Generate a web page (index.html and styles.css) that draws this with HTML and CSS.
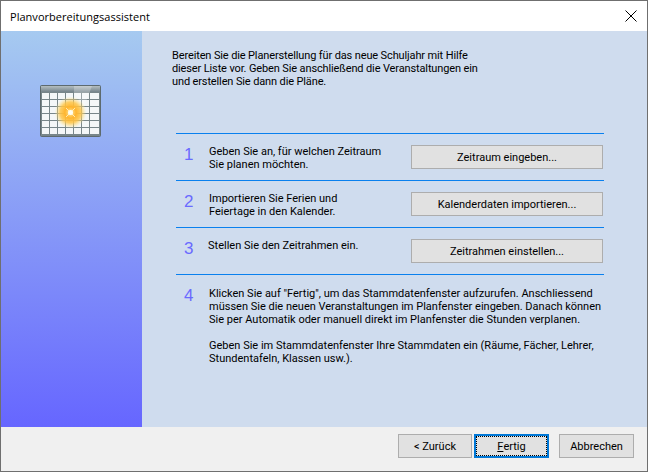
FILE: index.html
```html
<!DOCTYPE html>
<html lang="de">
<head>
<meta charset="utf-8">
<title>Planvorbereitungsassistent</title>
<link rel="stylesheet" href="styles.css">
</head>
<body>
<div class="window">
  <header class="titlebar">
    <span class="title">Planvorbereitungsassistent</span>
    <svg class="close" width="12" height="12" viewBox="0 0 12 12"><path d="M0.5 0.5L11.5 11.5M11.5 0.5L0.5 11.5" stroke="#000" stroke-width="1" fill="none"/></svg>
  </header>
  <div class="main">
    <aside class="sidebar">
      <svg class="calendar" width="62" height="53" viewBox="0 0 62 53">
        <defs>
          <linearGradient id="head" x1="0" y1="0" x2="0" y2="1"><stop offset="0" stop-color="#b4bec0"/><stop offset="1" stop-color="#75838a"/></linearGradient>
          <radialGradient id="glow"><stop offset="0" stop-color="#ffe9a0"/><stop offset="0.35" stop-color="#ffb52e"/><stop offset="0.65" stop-color="#ffc648" stop-opacity="0.85"/><stop offset="1" stop-color="#ffe890" stop-opacity="0"/></radialGradient>
        </defs>
        <rect x="0.5" y="0.5" width="60" height="51" rx="1" fill="#78868a" stroke="#5d6a6e"/>
        <rect x="1" y="1" width="59" height="6" fill="url(#head)"/>
        <g fill="#f4f7f8">
          <rect x="2" y="8" width="7" height="6"/><rect x="10" y="8" width="7" height="6"/><rect x="18" y="8" width="7" height="6"/><rect x="26" y="8" width="7" height="6"/><rect x="34" y="8" width="7" height="6"/><rect x="42" y="8" width="7" height="6"/><rect x="50" y="8" width="9" height="6"/>
          <rect x="2" y="15" width="7" height="6"/><rect x="10" y="15" width="7" height="6"/><rect x="18" y="15" width="7" height="6"/><rect x="26" y="15" width="7" height="6"/><rect x="34" y="15" width="7" height="6"/><rect x="42" y="15" width="7" height="6"/><rect x="50" y="15" width="9" height="6"/>
          <rect x="2" y="22" width="7" height="6"/><rect x="10" y="22" width="7" height="6"/><rect x="18" y="22" width="7" height="6"/><rect x="26" y="22" width="7" height="6"/><rect x="34" y="22" width="7" height="6"/><rect x="42" y="22" width="7" height="6"/><rect x="50" y="22" width="9" height="6"/>
          <rect x="2" y="29" width="7" height="6"/><rect x="10" y="29" width="7" height="6"/><rect x="18" y="29" width="7" height="6"/><rect x="26" y="29" width="7" height="6"/><rect x="34" y="29" width="7" height="6"/><rect x="42" y="29" width="7" height="6"/><rect x="50" y="29" width="9" height="6"/>
          <rect x="2" y="36" width="7" height="6"/><rect x="10" y="36" width="7" height="6"/><rect x="18" y="36" width="7" height="6"/><rect x="26" y="36" width="7" height="6"/><rect x="34" y="36" width="7" height="6"/><rect x="42" y="36" width="7" height="6"/><rect x="50" y="36" width="9" height="6"/>
          <rect x="2" y="43" width="7" height="6"/><rect x="10" y="43" width="7" height="6"/><rect x="18" y="43" width="7" height="6"/><rect x="26" y="43" width="7" height="6"/><rect x="34" y="43" width="7" height="6"/><rect x="42" y="43" width="7" height="6"/><rect x="50" y="43" width="9" height="6"/>
        </g>
        <path d="M34 1L52 1L44 22L34 8Z" fill="#fff" opacity="0.25"/>
        <circle cx="30.5" cy="27.5" r="16" fill="url(#glow)"/>
        <path d="M26 23L35 32M35 23L26 32" stroke="#fff6d0" stroke-width="1" opacity="0.8"/>
        <circle cx="30.5" cy="27.5" r="2.5" fill="#fffef0"/>
      </svg>
    </aside>
    <section class="content">
      <p class="intro">Bereiten Sie die Planerstellung für das neue Schuljahr mit Hilfe<br>dieser Liste vor. Geben Sie anschließend die Veranstaltungen ein<br>und erstellen Sie dann die Pläne.</p>
      <div class="steps">
        <div class="step">
          <span class="num">1</span>
          <span class="text">Geben Sie an, für welchen Zeitraum<br>Sie planen möchten.</span>
          <button class="btn wide">Zeitraum eingeben...</button>
        </div>
        <div class="step">
          <span class="num">2</span>
          <span class="text">Importieren Sie Ferien und<br>Feiertage in den Kalender.</span>
          <button class="btn wide">Kalenderdaten importieren...</button>
        </div>
        <div class="step">
          <span class="num">3</span>
          <span class="text shifted">Stellen Sie den Zeitrahmen ein.</span>
          <button class="btn wide">Zeitrahmen einstellen...</button>
        </div>
        <div class="step last">
          <span class="num">4</span>
          <div class="text">
            <p>Klicken Sie auf "Fertig", um das Stammdatenfenster aufzurufen. Anschliessend<br>müssen Sie die neuen Veranstaltungen im Planfenster eingeben. Danach können<br>Sie per Automatik oder manuell direkt im Planfenster die Stunden verplanen.</p>
            <p>Geben Sie im Stammdatenfenster Ihre Stammdaten ein (Räume, Fächer, Lehrer,<br>Stundentafeln, Klassen usw.).</p>
          </div>
        </div>
      </div>
    </section>
  </div>
  <footer class="footer">
    <button class="btn nav back">&lt; Zurück</button>
    <button class="btn nav default"><span class="focus"><u>F</u>ertig</span></button>
    <button class="btn nav">Abbrechen</button>
  </footer>
</div>
</body>
</html>
```
FILE: styles.css
```css
* { box-sizing: border-box; }
html, body { margin: 0; padding: 0; }
body { width: 648px; height: 472px; overflow: hidden; font-family: Roboto, sans-serif; font-size: 11px; color: #000; }
.window { width: 648px; height: 472px; border: 1px solid #6f6f6f; display: flex; flex-direction: column; background: #f0f0f0; }
.titlebar { height: 30px; background: #fff; display: flex; align-items: center; justify-content: space-between; padding: 0 10px 0 9px; flex: none; }
.title { font-family: "Open Sans", sans-serif; font-size: 11px; letter-spacing: 0.03px; }
.close { display: block; }
.main { height: 396px; display: flex; flex: none; }
.sidebar { width: 141px; flex: none; background: linear-gradient(#a6caf0, #6666ff); padding: 54px 0 0 39px; }
.calendar { display: block; }
.content { flex: 1; background: #cfdcee; padding: 18px 0 0 34px; }
.intro { margin: 0 0 45px -4px; line-height: 13px; letter-spacing: -0.13px; }
.steps { width: 428px; }
.step { border-top: 1px solid #0a80ee; height: 47px; display: flex; }
.num { width: 33px; padding-left: 8px; padding-top: 10px; font-size: 17px; line-height: 22px; color: #6a6aff; flex: none; font-family: "Liberation Sans", sans-serif; }
.text { width: 202px; padding-top: 11px; line-height: 13px; flex: none; }
.text.shifted { margin-left: -1px; width: 203px; }
.text p { margin: 0 0 13px; }
.last { height: auto; }
.last .text { width: 395px; white-space: nowrap; padding-top: 12px; }
.btn { font: inherit; color: #000; background: #e1e1e1; border: 1px solid #adadad; padding: 0; display: block; }
.wide { width: 192px; height: 24px; margin-top: 11px; }
.footer { flex: 1; display: flex; justify-content: flex-end; padding: 7px 13px 0 0; align-items: flex-start; }
.nav { width: 75px; height: 24px; margin-left: 10px; }
.back { width: 74px; margin-right: -8px; }
.default { border: 2px solid #0078d7; }
.focus { display: flex; align-items: center; justify-content: center; height: 100%; border: 1px dotted #000; }
```
